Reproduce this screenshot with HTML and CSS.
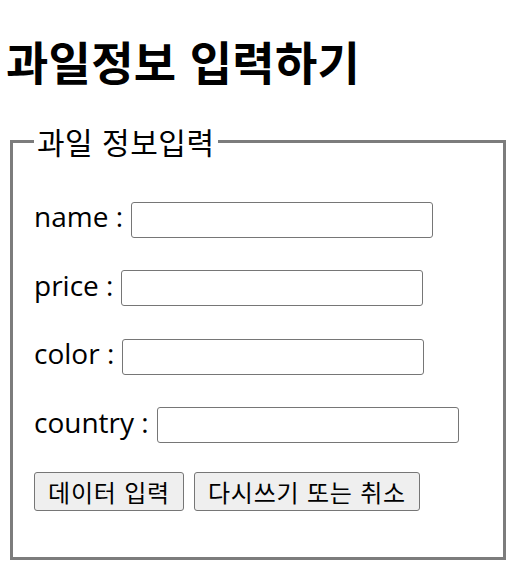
FILE: index.html
```html
<!DOCTYPE html>
<html lang="ko">
<head>
<meta charset="utf-8">
<title>과일정보 입력하기</title>
<link rel="stylesheet" href="styles.css">
</head>
<body>
<h1 class="title">과일정보 입력하기</h1>
<form class="fruit-form">
  <fieldset class="panel">
    <legend class="panel-title">과일 정보입력</legend>
    <div class="rows">
      <div class="row"><label class="label" for="name">name :</label><input class="field" id="name" type="text"></div>
      <div class="row"><label class="label" for="price">price :</label><input class="field" id="price" type="text"></div>
      <div class="row"><label class="label" for="color">color :</label><input class="field" id="color" type="text"></div>
      <div class="row"><label class="label" for="country">country :</label><input class="field" id="country" type="text"></div>
      <div class="row actions">
        <button class="btn" type="submit">데이터 입력</button>
        <button class="btn" type="reset">다시쓰기 또는 취소</button>
      </div>
    </div>
  </fieldset>
</form>
</body>
</html>
```
FILE: styles.css
```css
html, body {
  background: #ffffff;
}

body {
  margin: 0;
  padding: 8px;
  color: #000000;
  font-family: "Open Sans", "Noto Sans CJK KR", sans-serif;
}

.title {
  margin: 24px 0 33px -2px;
  font-family: "Noto Sans CJK KR", sans-serif;
  font-size: 46px;
  font-weight: 700;
  line-height: 56px;
  letter-spacing: 0.3px;
}

.fruit-form {
  margin: 0;
}

.panel {
  margin: 0 2px;
  padding: 38px 21px 46px;
  border: 3px solid #7c7c7c;
  min-width: 0;
}

.panel-title {
  padding: 0 3px;
  font-family: "Noto Sans CJK KR", sans-serif;
  font-size: 30px;
  line-height: 40px;
  letter-spacing: 0.5px;
}

.rows {
  display: flex;
  flex-direction: column;
  gap: 27.5px;
}

.row {
  display: flex;
  align-items: center;
  gap: 8px;
  height: 41px;
}

.label {
  font-size: 28px;
  line-height: 32px;
  padding-bottom: 7px;
}

.field {
  box-sizing: border-box;
  width: 302px;
  height: 36px;
  margin: 0;
  padding: 1px 2px;
  border: 1px solid #767676;
  border-radius: 3px;
  background: #ffffff;
  font-size: 24px;
}

.actions {
  height: 39px;
  margin-top: -1px;
  gap: 10px;
}

.btn {
  box-sizing: border-box;
  height: 39px;
  margin: 0;
  padding: 0 13px;
  border: 1px solid #767676;
  border-radius: 3px;
  background: #efefef;
  color: #000000;
  font-family: "Noto Sans CJK KR", sans-serif;
  font-size: 24px;
  letter-spacing: 0.8px;
  line-height: 1;
}
```
